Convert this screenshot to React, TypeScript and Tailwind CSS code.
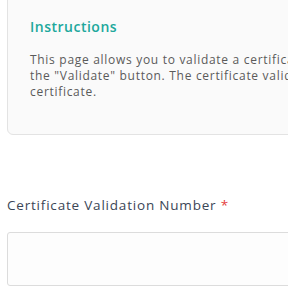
export default function App() {
  return (
    <div
      className="w-[288px] h-[288px] overflow-hidden bg-white"
      style={{ fontFamily: '"Open Sans", "Noto Sans", sans-serif' }}
    >
      <div className="pl-[7px] w-[700px]">
        <div className="-mt-[12px] h-[147px] rounded-[6px] border border-[#e3e3e3] bg-[#fafafa] pl-[22px] pt-[28px]">
          <div className="text-[14px] font-semibold leading-[20px] text-[#20a89c] tracking-[0.5px]">
            Instructions
          </div>
          <p className="mt-[15px] whitespace-nowrap text-[12px] leading-[16px] text-[#5a5a5a] tracking-[0.7px]">
            This page allows you to validate a certificate by clicking
            <br />
            the "Validate" button. The certificate validation number is on the
            <br />
            certificate.
          </p>
        </div>
        <div className="mt-[60px] text-[13.5px] leading-[20px] text-[#3b4656] tracking-[0.8px]">
          Certificate Validation Number <span className="text-[#e53e3e]">*</span>
        </div>
        <div className="mt-[17px] h-[54px] rounded-[3px] border border-[#dcdcdc] bg-[#fdfdfd]" />
      </div>
    </div>
  );
}
